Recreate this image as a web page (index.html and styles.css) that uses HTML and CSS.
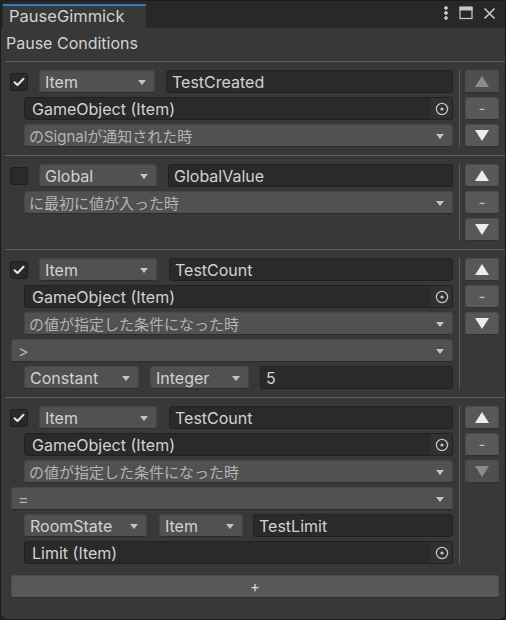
FILE: index.html
```html
<!DOCTYPE html>
<html lang="ja">
<head>
    <meta charset="UTF-8">
    <title>PauseGimmick</title>
    <link rel="stylesheet" href="styles.css">
</head>
<body>
    <div class="window">
        <div class="tabbar">
            <div class="tab">PauseGimmick</div>
            <div class="tab-actions">
                <svg class="icon" width="6" height="16" viewBox="0 0 6 16"><circle cx="3" cy="3" r="1.4"/><circle cx="3" cy="8" r="1.4"/><circle cx="3" cy="13" r="1.4"/></svg>
                <svg class="icon" width="14" height="14" viewBox="0 0 14 14"><rect x="1" y="1.5" width="12" height="11" fill="none" stroke-width="1.2"/><rect x="1" y="1" width="12" height="3"/></svg>
                <svg class="icon" width="13" height="13" viewBox="0 0 13 13"><path d="M1.5 1.5 L11.5 11.5 M11.5 1.5 L1.5 11.5" fill="none" stroke-width="1.6"/></svg>
            </div>
        </div>

        <div class="section-title">Pause Conditions</div>

        <div class="list">
            <!-- condition 1 -->
            <div class="entry">
                <div class="entry-body">
                    <div class="row">
                        <span class="toggle on"><svg width="12" height="10" viewBox="0 0 12 10"><path d="M1.5 5.2 L4.5 8 L10.5 1.8"/></svg></span>
                        <span class="popup w116"><span>Item</span><i class="caret"></i></span>
                        <span class="field grow">TestCreated</span>
                    </div>
                    <div class="row indent">
                        <span class="field object grow"><span class="label">GameObject (Item)</span><span class="picker"><svg width="14" height="14" viewBox="0 0 14 14"><circle cx="7" cy="7" r="5.6" fill="none"/><circle cx="7" cy="7" r="1.6" class="dot"/></svg></span></span>
                    </div>
                    <div class="row indent">
                        <span class="popup grow jp"><span>のSignalが通知された時</span><i class="caret"></i></span>
                    </div>
                </div>
                <div class="entry-side">
                    <button class="step disabled"><svg width="14" height="11" viewBox="0 0 14 11"><path d="M7 0 L14 11 L0 11 Z"/></svg></button>
                    <button class="step">-</button>
                    <button class="step"><svg width="14" height="11" viewBox="0 0 14 11"><path d="M0 0 L14 0 L7 11 Z"/></svg></button>
                </div>
            </div>

            <!-- condition 2 -->
            <div class="entry">
                <div class="entry-body">
                    <div class="row">
                        <span class="toggle"></span>
                        <span class="popup w118"><span>Global</span><i class="caret"></i></span>
                        <span class="field grow">GlobalValue</span>
                    </div>
                    <div class="row indent">
                        <span class="popup grow jp"><span>に最初に値が入った時</span><i class="caret"></i></span>
                    </div>
                </div>
                <div class="entry-side">
                    <button class="step"><svg width="14" height="11" viewBox="0 0 14 11"><path d="M7 0 L14 11 L0 11 Z"/></svg></button>
                    <button class="step">-</button>
                    <button class="step"><svg width="14" height="11" viewBox="0 0 14 11"><path d="M0 0 L14 0 L7 11 Z"/></svg></button>
                </div>
            </div>

            <!-- condition 3 -->
            <div class="entry">
                <div class="entry-body">
                    <div class="row">
                        <span class="toggle on"><svg width="12" height="10" viewBox="0 0 12 10"><path d="M1.5 5.2 L4.5 8 L10.5 1.8"/></svg></span>
                        <span class="popup w118 wide-gap"><span>Item</span><i class="caret"></i></span>
                        <span class="field grow">TestCount</span>
                    </div>
                    <div class="row indent">
                        <span class="field object grow"><span class="label">GameObject (Item)</span><span class="picker"><svg width="14" height="14" viewBox="0 0 14 14"><circle cx="7" cy="7" r="5.6" fill="none"/><circle cx="7" cy="7" r="1.6" class="dot"/></svg></span></span>
                    </div>
                    <div class="row indent">
                        <span class="popup grow jp"><span>の値が指定した条件になった時</span><i class="caret"></i></span>
                    </div>
                    <div class="row flush">
                        <span class="popup grow dim"><span>&gt;</span><i class="caret"></i></span>
                    </div>
                    <div class="row indent">
                        <span class="popup w115"><span>Constant</span><i class="caret"></i></span>
                        <span class="popup w99"><span>Integer</span><i class="caret"></i></span>
                        <span class="field grow">5</span>
                    </div>
                </div>
                <div class="entry-side">
                    <button class="step"><svg width="14" height="11" viewBox="0 0 14 11"><path d="M7 0 L14 11 L0 11 Z"/></svg></button>
                    <button class="step">-</button>
                    <button class="step"><svg width="14" height="11" viewBox="0 0 14 11"><path d="M0 0 L14 0 L7 11 Z"/></svg></button>
                </div>
            </div>

            <!-- condition 4 -->
            <div class="entry last">
                <div class="entry-body">
                    <div class="row">
                        <span class="toggle on"><svg width="12" height="10" viewBox="0 0 12 10"><path d="M1.5 5.2 L4.5 8 L10.5 1.8"/></svg></span>
                        <span class="popup w118 wide-gap"><span>Item</span><i class="caret"></i></span>
                        <span class="field grow">TestCount</span>
                    </div>
                    <div class="row indent">
                        <span class="field object grow"><span class="label">GameObject (Item)</span><span class="picker"><svg width="14" height="14" viewBox="0 0 14 14"><circle cx="7" cy="7" r="5.6" fill="none"/><circle cx="7" cy="7" r="1.6" class="dot"/></svg></span></span>
                    </div>
                    <div class="row indent">
                        <span class="popup grow jp"><span>の値が指定した条件になった時</span><i class="caret"></i></span>
                    </div>
                    <div class="row flush">
                        <span class="popup grow dim"><span>=</span><i class="caret"></i></span>
                    </div>
                    <div class="row indent">
                        <span class="popup w123 wide-gap"><span>RoomState</span><i class="caret"></i></span>
                        <span class="popup w84 narrow-gap"><span>Item</span><i class="caret"></i></span>
                        <span class="field grow">TestLimit</span>
                    </div>
                    <div class="row indent">
                        <span class="field object grow"><span class="label">Limit (Item)</span><span class="picker"><svg width="14" height="14" viewBox="0 0 14 14"><circle cx="7" cy="7" r="5.6" fill="none"/><circle cx="7" cy="7" r="1.6" class="dot"/></svg></span></span>
                    </div>
                </div>
                <div class="entry-side">
                    <button class="step"><svg width="14" height="11" viewBox="0 0 14 11"><path d="M7 0 L14 11 L0 11 Z"/></svg></button>
                    <button class="step">-</button>
                    <button class="step disabled"><svg width="14" height="11" viewBox="0 0 14 11"><path d="M0 0 L14 0 L7 11 Z"/></svg></button>
                </div>
            </div>
        </div>

        <button class="add-button">+</button>
    </div>
</body>
</html>
```

FILE: styles.css
```css
* {
    margin: 0;
    padding: 0;
    box-sizing: border-box;
}

body {
    background: #232323;
    font-family: Inter, "Noto Sans CJK JP", sans-serif;
    font-size: 16px;
    color: #d2d2d2;
}

.window {
    width: 506px;
    height: 620px;
    background: #383838;
    border: 1px solid #1b1b1b;
    border-radius: 7px;
    overflow: hidden;
    display: flex;
    flex-direction: column;
}

/* title strip */
.tabbar {
    height: 27px;
    background: #282828;
    display: flex;
    align-items: flex-end;
    padding-left: 2px;
}

.tab {
    width: 143px;
    height: 24px;
    background: #383838;
    border-top: 2px solid #3a79bb;
    padding-left: 6px;
    line-height: 21px;
    font-size: 16.5px;
    color: #d2d2d2;
}

.tab-actions {
    margin-left: auto;
    align-self: stretch;
    display: flex;
    align-items: center;
    gap: 10px;
    padding: 0 9px 3px 0;
}

.icon {
    fill: #c8c8c8;
    stroke: #c8c8c8;
}

.section-title {
    height: 33px;
    line-height: 31px;
    padding-left: 5px;
}

/* condition list */
.list {
    margin-left: 4px;
}

.entry {
    display: flex;
    border-top: 1px solid #5c5c5c;
    padding: 8px 0 8px 5px;
}

.entry.last {
    padding-bottom: 9px;
}

.entry-body {
    width: 443px;
    display: flex;
    flex-direction: column;
    gap: 4px;
}

.row {
    height: 23px;
    display: flex;
    align-items: center;
    gap: 11px;
}

.row.indent {
    padding-left: 14px;
}

.row.flush {
    padding-left: 1px;
}

.grow {
    flex: 1;
    min-width: 0;
}

.toggle {
    width: 18px;
    height: 18px;
    flex: none;
    background: #2a2a2a;
    border: 1px solid #1e1e1e;
    border-radius: 3px;
    display: flex;
    align-items: center;
    justify-content: center;
}

.toggle svg path {
    fill: none;
    stroke: #e8e8e8;
    stroke-width: 2;
    stroke-linecap: round;
    stroke-linejoin: round;
}

.popup {
    height: 23px;
    flex: none;
    display: flex;
    align-items: center;
    justify-content: space-between;
    padding: 0 8px 0 5px;
    background: #515151;
    border: 1px solid #464646;
    border-bottom-color: #2c2c2c;
    border-radius: 3px;
    white-space: nowrap;
}

.popup.grow {
    flex: 1;
}

.popup.jp,
.popup.dim {
    color: #b4b4b4;
    padding-left: 4px;
    font-size: 15px;
}

.popup.dim {
    padding-left: 6px;
    font-size: 16px;
}

.caret {
    width: 0;
    height: 0;
    border-left: 4.5px solid transparent;
    border-right: 4.5px solid transparent;
    border-top: 5px solid #c4c4c4;
    margin-top: 1px;
}

.w84 { width: 84px; }
.w99 { width: 99px; }
.w115 { width: 115px; }
.w116 { width: 116px; }
.w118 { width: 118px; }
.w123 { width: 123px; }

.wide-gap {
    margin-right: 1px;
}

.narrow-gap {
    margin-right: -1px;
}

.field {
    height: 23px;
    display: flex;
    align-items: center;
    padding-left: 5px;
    background: #2a2a2a;
    border: 1px solid #212121;
    border-radius: 3px;
    white-space: nowrap;
}

.field.object {
    padding-left: 7px;
    overflow: hidden;
}

.field .label {
    flex: 1;
}

.picker {
    width: 23px;
    align-self: stretch;
    margin: -1px -1px -1px 0;
    background: #313131;
    border-radius: 0 3px 3px 0;
    display: flex;
    align-items: center;
    justify-content: center;
}

.picker svg circle {
    stroke: #c4c4c4;
    stroke-width: 1.3;
}

.picker svg .dot {
    fill: #c4c4c4;
    stroke: none;
}

/* reorder buttons */
.entry-side {
    margin-left: 6px;
    padding-left: 5px;
    border-left: 1px solid #5c5c5c;
    display: flex;
    flex-direction: column;
    gap: 4px;
}

.step {
    width: 34px;
    height: 23px;
    background: #585858;
    border: 1px solid #4c4c4c;
    border-bottom-color: #303030;
    border-radius: 3px;
    color: #c4c4c4;
    font-family: Inter, sans-serif;
    font-size: 15px;
    display: flex;
    align-items: center;
    justify-content: center;
}

.step svg {
    fill: #ececec;
}

.step.disabled {
    background: #4f4f4f;
}

.step.disabled svg {
    fill: #8c8c8c;
}

.add-button {
    margin: 2px 0 0 10px;
    width: 488px;
    height: 23px;
    background: #585858;
    border: 1px solid #4c4c4c;
    border-bottom-color: #2e2e2e;
    border-radius: 3px;
    color: #d8d8d8;
    font-family: Inter, sans-serif;
    font-size: 15px;
    line-height: 20px;
}
```
